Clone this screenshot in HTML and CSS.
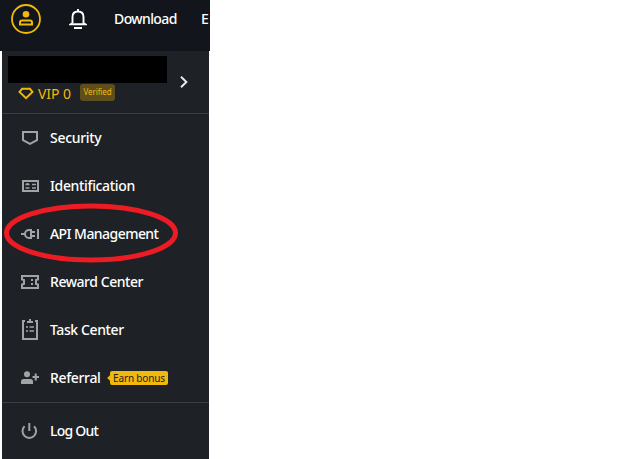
FILE: index.html
```
<!DOCTYPE html>
<html lang="en">
<head>
<meta charset="utf-8">
<title>Account menu</title>
<link rel="stylesheet" href="styles.css">
</head>
<body>
<div class="app">
  <header class="topbar">
    <svg class="avatar" width="30" height="30" viewBox="0 0 30 30" fill="none" stroke="#f0b90b"><circle cx="15" cy="15" r="14" stroke-width="1.8"/><circle cx="15" cy="10.3" r="3.3" fill="#f0b90b" stroke="none"/><path d="M9 20.5v-2q0-2 2-2h8q2 0 2 2v2z" stroke-width="2"/></svg>
    <svg class="bell" width="18" height="22" viewBox="0 0 18 22" fill="none" stroke="#fff" stroke-width="1.9"><path d="M9 1v2M3.5 15V9q0-5.5 5.5-5.5t5.5 5.5v6l1.8 1.2H1.7L3.5 15"/><path d="M5 20h8" stroke-width="2"/></svg>
    <span class="download">Download</span>
    <span class="language">E</span>
  </header>
  <main class="panel">
    <section class="profile">
      <div class="account">
        <div class="redacted"></div>
        <div class="status">
          <svg width="16" height="13" viewBox="0 0 16 13" fill="none" stroke="#f0b90b" stroke-width="1.9"><path d="M4.1 1.8h7.8l2.6 3.2L8 11.2 1.5 5z"/></svg>
          <span class="vip">VIP 0</span>
          <span class="verified">Verified</span>
        </div>
      </div>
      <svg class="chevron" width="8" height="12" viewBox="0 0 8 12" fill="none" stroke="#eaecef" stroke-width="1.9"><path d="M1 .7 6.4 6 1 11.3"/></svg>
    </section>
    <nav class="menu">
      <a class="item"><svg width="20" height="24" viewBox="0 0 20 24"><path class="line" d="M3 6h14v8.2l-7 3.7-7-3.7z"/></svg><span class="security">Security</span></a>
      <a class="item"><svg width="20" height="24" viewBox="0 0 20 24"><path class="line" d="M3 7h15v10H3z"/><path class="line thin" d="M5.5 10.5h4M5.5 14h4M12 10.5h4M12 14h4"/><path class="fill" d="M6.5 9h2v2h-2z"/></svg><span class="identification">Identification</span></a>
      <a class="item"><svg width="20" height="24" viewBox="0 0 20 24"><path class="line" d="M1 12h4M11 8H9a4 4 0 0 0 0 8h2zM11 10h4M11 14h4M18 7v10"/></svg><span class="api-label">API Management</span>
        <svg class="highlight" width="176" height="62" viewBox="0 0 176 62"><ellipse cx="88" cy="31" rx="84.5" ry="27"/></svg>
      </a>
      <a class="item"><svg width="20" height="24" viewBox="0 0 20 24"><path class="line" d="M2 6h16v3.5l-2 .5v4l2 .5V18H2v-3.5l2-.5v-4l-2-.5z"/><path class="fill" d="M11 9h2v2h-2zM11 13h2v2h-2z"/></svg><span class="reward">Reward Center</span></a>
      <a class="item"><svg width="20" height="24" viewBox="0 0 20 24"><path class="line" d="M5 3H3v18h14V3h-2M7 4h6M10 1v3"/><path class="line thin" d="M6 9h2M9.5 9H14M6 13h2M9.5 13H14"/></svg><span class="task">Task Center</span></a>
      <a class="item"><svg width="20" height="24" viewBox="0 0 20 24"><circle class="fill" cx="7" cy="8.2" r="3"/><path class="fill" fill-rule="evenodd" d="M1 18v-2.5q0-2.5 2.5-2.5h7q2.5 0 2.5 2.5V18z"/><path class="line" d="M12.5 11H19M15.7 7.5v7"/></svg><span class="referral">Referral</span><span class="bonus">Earn bonus</span></a>
    </nav>
    <a class="item logout"><svg width="20" height="24" viewBox="0 0 20 24"><path class="line" d="M9.3 4v8M4.6 7.2a6.8 6.8 0 1 0 9.4 0"/></svg><span class="exit">Log Out</span></a>
  </main>
</div>
</body>
</html>
```

FILE: styles.css
```
* { box-sizing: border-box; }
body { margin: 0; background: #fff; overflow: hidden; font-family: "Noto Sans", sans-serif; }
svg { display: block; flex: none; }
.app { width: 210px; height: 459px; }
.topbar { display: flex; align-items: flex-start; height: 51px; padding: 4px 0 0 11px; overflow: hidden; background: #12161c; color: #fff; font-size: 14px; font-weight: 500; line-height: 30px; white-space: nowrap; }
.bell { margin: 4px 0 0 28px; }
.download { width: 64px; margin-left: 27px; letter-spacing: -.6px; }
.language { margin-left: 23px; }
.panel { width: 207px; height: 408px; margin-left: 2px; background: #1e2226; }
.profile { display: flex; height: 63px; padding: 5px 0 0 6px; border-bottom: 1px solid #393e44; }
.account { width: 159px; }
.redacted { height: 27px; background: #000; }
.status { display: flex; align-items: center; height: 20px; padding-left: 10px; }
.vip { width: 34px; margin-left: 4px; color: #f0b90b; font-size: 14px; line-height: 19px; letter-spacing: -.05px; white-space: nowrap; }
.verified { width: 35px; height: 17px; margin: -1px 0 0 8px; border-radius: 3px; background: #5e4e1e; color: #f0b90b; font-size: 8px; line-height: 16px; text-align: center; letter-spacing: -.1px; }
.chevron { margin: 20px 0 0 13px; }
.item { position: relative; display: flex; align-items: center; height: 48px; padding-left: 18px; color: #fff; font-size: 14px; font-weight: 500; white-space: nowrap; }
.item > span:first-of-type { margin-left: 10px; padding-bottom: 2px; }
.line { fill: none; stroke: #a1a3a5; stroke-width: 2; }
.thin { stroke-width: 1.3; }
.fill { fill: #a1a3a5; }
.security { letter-spacing: -.3px; }
.identification { letter-spacing: -.35px; }
.api-label { letter-spacing: -.55px; }
.reward { letter-spacing: -.45px; }
.task { letter-spacing: -.4px; }
.referral { width: 50px; letter-spacing: -.35px; }
.exit { letter-spacing: -.75px; }
.highlight { position: absolute; left: 1px; top: -8px; }
.highlight ellipse { fill: none; stroke: #ed1c24; stroke-width: 5; }
.bonus { position: relative; width: 58px; height: 14px; margin-left: 10px; border-radius: 2px; background: #f0b90b; color: #1e2226; font-size: 10px; font-weight: 400; line-height: 14px; text-align: center; letter-spacing: -.15px; }
.bonus::before { content: ""; position: absolute; left: -2px; top: 5px; width: 4px; height: 4px; background: #f0b90b; transform: rotate(45deg); }
.menu { height: 289px; border-bottom: 1px solid #393e44; }
.logout { height: 56px; }
```
